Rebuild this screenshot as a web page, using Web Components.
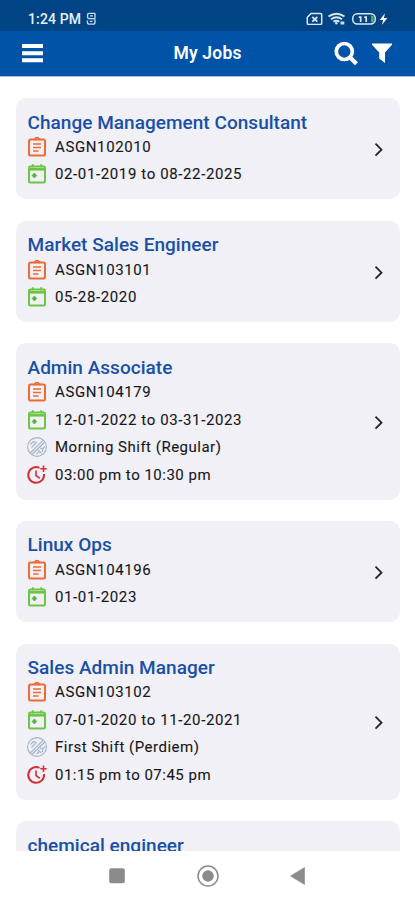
<!DOCTYPE html>
<html lang="en">
<head>
<meta charset="utf-8">
<title>My Jobs</title>
<style>
html,body{margin:0;height:100%;background:#fff}
body{font-family:Roboto,"Noto Sans",sans-serif;overflow:hidden}
</style>
</head>
<body>
<jobs-app></jobs-app>
<script>
const define = (name, html, setup) => customElements.define(name, class extends HTMLElement {
  connectedCallback() {
    if (this.shadowRoot) return;
    const root = this.attachShadow({ mode: 'open' });
    const t = document.createElement('template');
    t.innerHTML = html;
    root.append(t.content.cloneNode(true));
    if (setup) setup(this, root);
  }
});

define('status-bar', `
<style>
:host{display:flex;height:31px;flex:none;box-sizing:border-box;padding:8px 26px 0 28px;background:#014486;color:#e9f1fa;align-items:flex-start}
.time{font-size:14px;line-height:23px;font-weight:500;letter-spacing:.12px;white-space:nowrap}
svg{display:block;flex:none}
.note{margin:4px 0 0 4.500px}.grow{flex:1}
</style>
<span class="time">1:24 PM</span>
<svg class="note" width="10" height="14" viewBox="0 0 10 14" fill="none" stroke="#c9dcf0" stroke-width="1.300"><path d="M9 1.300H3Q1.600 1.300 1.600 2.700V5.200Q1.600 6.600 3 6.600H7.600Q9 6.600 9 8V10.200Q9 12.200 7 12.200H3.400Q1.400 12.200 1.400 10.200V8.500M9 1.300V6.500M4 3.900H7M3.800 9.300H6.500"/></svg>
<span class="grow"></span>
<svg width="84" height="17" viewBox="305 0 84 17" fill="none" stroke="#dce8f4" stroke-width="1.500">
<path d="M311 5.500h9.500q1.200 0 1.200 1.200v8.500q0 1.200-1.200 1.200H308.500q-1.200 0-1.200-1.200V9.200z"/><path d="M312.300 9l5 4.600M317.300 9l-5 4.600" stroke-width="1.800"/>
<path d="M328.500 8.600q8-5.800 16 0M331 11.200q5.500-3.800 11 0M333.400 13.700q3.100-2 6 0" stroke-width="1.900"/><circle cx="336.300" cy="15.300" r="1.200" fill="#dce8f4" stroke="none"/><path d="M340.500 13.500h3.800v3h-3.800z" fill="#c8daeb" stroke="none"/>
<rect x="352.800" y="5.800" width="22.400" height="10.200" rx="4.500"/><path d="M372.400 7.500v7" stroke="#55b94c" stroke-width="2.500"/>
<path d="M358.700 9.100h2v4.800M364.200 9.100h2v4.800" stroke-width="1.700"/>
<path d="M385 5.300l-5.200 6.600h3.400l-1.400 5 5.600-6.800h-3.500z" fill="#fff" stroke="none"/>
</svg>`);

define('app-bar', `
<style>
:host{display:grid;grid-template-columns:1fr auto 1fr;align-items:center;height:45px;flex:none;background:#0153a8;padding:0 23px 1px 22px;box-sizing:border-box;color:#fff}
h1{margin:0;font-size:17.500px;font-weight:600;line-height:22px;letter-spacing:.2px;white-space:nowrap;padding-left:1px}
svg{display:block}.right{display:flex;justify-content:flex-end;gap:14px}
</style>
<svg width="21" height="20" viewBox="0 0 21 20"><path d="M0 1h21v4H0zM0 8.200h21v4H0zM0 15.200h21v4H0z" fill="#fff"/></svg>
<h1><slot></slot></h1>
<div class="right">
<svg width="24" height="24" viewBox="0 0 24 24" fill="none" stroke="#fff"><circle cx="10.300" cy="10.500" r="8" stroke-width="3.700"/><path d="M15.800 16.300L22.500 22.800" stroke-width="4.200"/></svg>
<svg width="20" height="24" viewBox="0 0 20 24"><path d="M0 2.500h20q.4.600 0 1.200L13 11.500V22L7.200 17.500V11.500L0 3.700z" fill="#fff"/></svg>
</div>`);

const icons = {
  code: '<g fill="none" stroke="#ee6a36"><rect x="2" y="2.500" width="16" height="16" rx="1.500" stroke-width="2"/><path d="M6.500 2.300H8Q8.300 .6 10 .6t2 1.700h1.500" stroke-width="1.800"/><path d="M6 7h8M6 10.500h8M6 14h5.500" stroke-width="1.500"/></g>',
  date: '<g fill="none" stroke="#6cc644"><rect x="2" y="2.500" width="16" height="16" rx="1.500" stroke-width="2"/><path d="M5.800 .2v3M14.200 .2v3" stroke-width="2"/><path d="M2 5.300h16" stroke-width="2.600"/></g><path d="M7.400 9l2.300 2.500-2.300 2.500-2.300-2.500z" fill="#55b438" stroke="#55b438" stroke-width=".8"/>',
  shift: '<g fill="none" stroke="#a3b5c8" stroke-width="1.100"><circle cx="10" cy="10" r="9.400"/><path d="M3.300 16L16 3.300M5 17.500L17.700 5"/><path d="M3.500 7.500l3-3 3.500 1.500M4.500 10.500L8.500 6.500M12.500 10.500l3 1.500 2.500-2.500M11 13l3.500 3M9.500 17l3-2.500M15.500 12v3"/></g>',
  time: '<g fill="none" stroke="#d62f37" stroke-width="2"><path d="M12.500 2.800A7.900 7.900 0 1 0 17 9"/><path d="M9 5.500v5l3.800 2.800" stroke-width="1.600"/><path d="M16.500 .6v6.400M13.300 3.800h6.400" stroke-width="1.600"/></g>'
};

define('job-line', `
<style>
:host{display:flex;align-items:center;height:27.500px;color:#17171c;font-size:15px;line-height:20px;letter-spacing:.5px;white-space:nowrap;-webkit-text-stroke:.1px}
:host([icon=date]),:host([icon=code]){letter-spacing:.62px}
svg{width:20px;height:20px;flex:none;margin-right:8.500px;overflow:visible}
</style><svg viewBox="0 0 20 20"></svg><span><slot></slot></span>`,
(el, root) => { root.querySelector('svg').innerHTML = icons[el.getAttribute('icon')]; });

define('job-card', `
<style>
:host{display:flex;align-items:center;box-sizing:border-box;min-height:101.200px;background:#f0f0f6;border-radius:10px;padding:13.500px 16px 11.200px 11.500px;flex:none}
.body{flex:1;min-width:0;align-self:flex-start}
h2{margin:0;height:21.500px;line-height:21.500px;font-size:19px;font-weight:500;color:#1950a5;white-space:nowrap;letter-spacing:.03px}
.lines{margin-left:-1px}
svg{flex:none;display:block}
</style>
<div class="body"><h2><slot name="title"></slot></h2><div class="lines"><slot></slot></div></div>
<svg width="10" height="16" viewBox="0 0 10 16"><path d="M1.500 1.700l6 6-6 6" fill="none" stroke="#222228" stroke-width="1.800"/></svg>`);

define('nav-bar', `
<style>
:host{display:flex;height:49px;flex:none;background:#fff;justify-content:center;align-items:center;gap:68.500px}
svg{display:block}
</style>
<svg width="22" height="22" viewBox="0 0 22 22"><rect x="3.200" y="3.200" width="15.600" height="15" rx="2" fill="#8b8b8b"/></svg>
<svg width="22" height="22" viewBox="0 0 22 22"><circle cx="11" cy="11" r="10" fill="none" stroke="#8b8b8b" stroke-width="1.500"/><circle cx="11" cy="11" r="5.800" fill="#8b8b8b"/></svg>
<svg width="22" height="22" viewBox="0 0 22 22"><path d="M17.500 2.500v17L3.500 11z" fill="#8b8b8b" stroke="#8b8b8b" stroke-width=".6" stroke-linejoin="round"/></svg>`);

define('jobs-app', `
<style>
:host{display:flex;flex-direction:column;height:900px;width:415px;background:#fff}
main{flex:1;min-height:0;overflow:hidden;display:flex;flex-direction:column;gap:21.400px;padding:21.200px 15.500px 0 16px;box-sizing:border-box;border-top:1px solid #a9bedb}
</style>
<status-bar></status-bar>
<app-bar>My Jobs</app-bar>
<main></main>
<nav-bar></nav-bar>`,
(el, root) => {
  const jobs = [
    ['Change Management Consultant', 'ASGN102010', '02-01-2019 to 08-22-2025'],
    ['Market Sales Engineer', 'ASGN103101', '05-28-2020'],
    ['Admin Associate', 'ASGN104179', '12-01-2022 to 03-31-2023', 'Morning Shift (Regular)', '03:00 pm to 10:30 pm'],
    ['Linux Ops', 'ASGN104196', '01-01-2023'],
    ['Sales Admin Manager', 'ASGN103102', '07-01-2020 to 11-20-2021', 'First Shift (Perdiem)', '01:15 pm to 07:45 pm'],
    ['chemical engineer']
  ];
  const kinds = ['code', 'date', 'shift', 'time'];
  root.querySelector('main').innerHTML = jobs.map(([title, ...lines]) =>
    `<job-card><span slot="title">${title}</span>${lines.map((l, i) => `<job-line icon="${kinds[i]}">${l}</job-line>`).join('')}</job-card>`).join('');
});
</script>
</body>
</html>
